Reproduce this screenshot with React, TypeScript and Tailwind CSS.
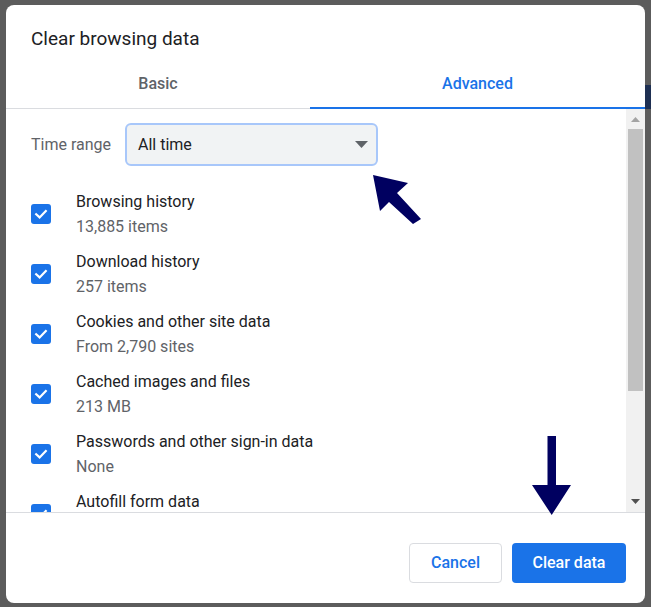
import React from "react";

const items = [
  { t: "Browsing history", s: "13,885 items" },
  { t: "Download history", s: "257 items" },
  { t: "Cookies and other site data", s: "From 2,790 sites" },
  { t: "Cached images and files", s: "213 MB" },
  { t: "Passwords and other sign-in data", s: "None" },
  { t: "Autofill form data", s: "" },
];

function Check() {
  return (
    <div className="w-[20px] h-[20px] shrink-0 rounded-[3px] bg-[#1a73e8] flex items-center justify-center">
      <svg width="20" height="20" viewBox="0 0 20 20">
        <path d="M5.2 10.2 L8.6 13.4 L14.8 7" fill="none" stroke="white" strokeWidth="2.2" strokeLinecap="square" />
      </svg>
    </div>
  );
}

export default function App() {
  return (
    <div
      className="relative w-[651px] h-[607px] bg-[#5c5c5c] flex overflow-hidden"
      style={{ fontFamily: "Roboto, 'Noto Sans', sans-serif" }}
    >
      <div className="w-[6px] shrink-0" />
      <div className="mt-[5px] mb-[4px] w-[639px] bg-white rounded-[8px] flex flex-col overflow-hidden">
        <div className="pt-[22px] pl-[25px] h-[52px] text-[19px] leading-[24px] text-[#202124]">
          Clear browsing data
        </div>
        <div className="flex h-[50px] pt-[4px] items-center text-[16px] font-medium">
          <div className="w-[304px] text-center text-[#5f6368]">Basic</div>
          <div className="flex-1 text-center text-[#1a73e8]">Advanced</div>
        </div>
        <div className="flex items-end h-[2px]">
          <div className="w-[304px] h-px bg-[#dadce0]" />
          <div className="flex-1 h-[2px] bg-[#1a73e8]" />
        </div>
        <div className="flex h-[403px] overflow-hidden">
          <div className="flex-1 overflow-hidden pl-[25px] pt-[14px]">
            <div className="flex items-center h-[43px]">
              <div className="w-[94px] text-[16px] text-[#5f6368]">Time range</div>
              <div className="w-[253px] h-[43px] rounded-[6px] border-2 border-[#a8c7fa] bg-[#f1f3f4] flex items-center justify-between pl-[11px] pr-[8px]">
                <span className="text-[16px] text-[#202124]">All time</span>
                <svg width="13" height="7" viewBox="0 0 13 7">
                  <path d="M0 0 L13 0 L6.5 7 Z" fill="#5f6368" />
                </svg>
              </div>
            </div>
            <div className="mt-[18px] flex flex-col">
              {items.map((it) => (
                <div key={it.t} className="flex items-center h-[60px] shrink-0">
                  <Check />
                  <div className="ml-[25px] flex flex-col text-[16px] leading-[25px]">
                    <span className="text-[#202124]">{it.t}</span>
                    <span className="text-[#5f6368] h-[25px]">{it.s}</span>
                  </div>
                </div>
              ))}
            </div>
          </div>
          <div className="w-[19px] shrink-0 bg-[#f1f1f1] flex flex-col">
            <div className="h-[20px] flex items-center justify-center">
              <svg width="9" height="5" viewBox="0 0 9 5">
                <path d="M4.5 0 L9 5 L0 5 Z" fill="#a3a3a3" />
              </svg>
            </div>
            <div className="mx-[2px] h-[262px] bg-[#c1c1c1]" />
            <div className="flex-1" />
            <div className="h-[22px] flex items-center justify-center">
              <svg width="9" height="5" viewBox="0 0 9 5">
                <path d="M0 0 L9 0 L4.5 5 Z" fill="#505050" />
              </svg>
            </div>
          </div>
        </div>
        <div className="h-px bg-[#dadce0]" />
        <div className="flex-1 flex justify-end items-start pt-[30px] pr-[19px] gap-[10px]">
          <button className="w-[93px] h-[40px] rounded-[4px] border border-[#dadce0] bg-white text-[#1a73e8] text-[16px] font-medium">
            Cancel
          </button>
          <button className="w-[114px] h-[40px] rounded-[4px] bg-[#1a73e8] text-white text-[16px] font-medium">
            Clear data
          </button>
        </div>
      </div>
      <div className="w-[6px] shrink-0 flex flex-col">
        <div className="h-[85px]" />
        <div className="h-[24px] bg-[#1e2f52]" />
      </div>

      <svg className="absolute left-[370px] top-[172px]" width="55" height="56" viewBox="0 0 55 56">
        <polygon points="3,3 38,11 27,21 51,47 43,52 19,30 10,39" fill="#000060" />
      </svg>
      <svg className="absolute left-[530px] top-[434px]" width="44" height="84" viewBox="0 0 44 84">
        <polygon points="17.5,2 26,2 26,51 41,51 21.7,81 2,51 17.5,51" fill="#000060" />
      </svg>
    </div>
  );
}
